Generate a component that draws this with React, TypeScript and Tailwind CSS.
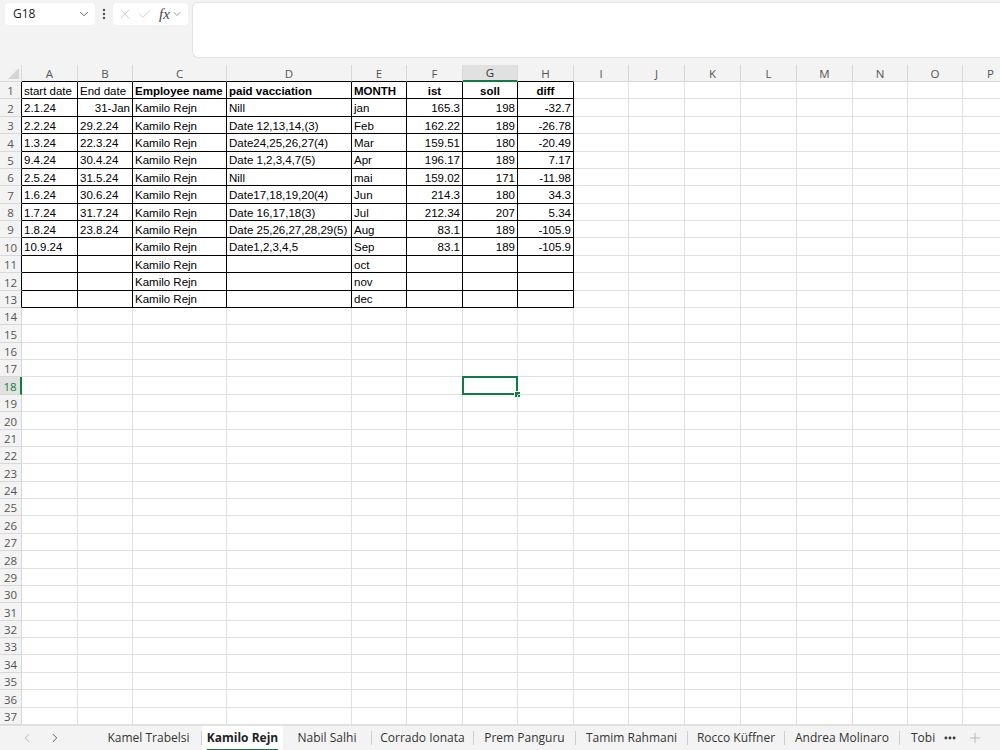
import React from "react";
import { ChevronDown, ChevronLeft, ChevronRight, X, Check, EllipsisVertical, Ellipsis, Plus } from "lucide-react";

const COLS = ["A", "B", "C", "D", "E", "F", "G", "H", "I", "J", "K", "L", "M", "N", "O", "P"];
const GRID = "grid grid-cols-[22px_56px_55px_94px_125px_55px_56px_55px_56px_55px_56px_56px_56px_56px_55px_55px_56px]";

type Cell = { t: string; b?: boolean; a?: "l" | "r" | "c" };

const R = (t: string): Cell => ({ t, a: "r" });
const L = (t: string): Cell => ({ t });
const B = (t: string, a: "l" | "c" = "l"): Cell => ({ t, b: true, a });

const DATA: Cell[][] = [
  [L("start date"), L("End date"), B("Employee name"), B("paid vacciation"), B("MONTH"), B("ist", "c"), B("soll", "c"), B("diff", "c")],
  [L("2.1.24"), R("31-Jan"), L("Kamilo Rejn"), L("Nill"), L("jan"), R("165.3"), R("198"), R("-32.7")],
  [L("2.2.24"), L("29.2.24"), L("Kamilo Rejn"), L("Date 12,13,14,(3)"), L("Feb"), R("162.22"), R("189"), R("-26.78")],
  [L("1.3.24"), L("22.3.24"), L("Kamilo Rejn"), L("Date24,25,26,27(4)"), L("Mar"), R("159.51"), R("180"), R("-20.49")],
  [L("9.4.24"), L("30.4.24"), L("Kamilo Rejn"), L("Date 1,2,3,4,7(5)"), L("Apr"), R("196.17"), R("189"), R("7.17")],
  [L("2.5.24"), L("31.5.24"), L("Kamilo Rejn"), L("Nill"), L("mai"), R("159.02"), R("171"), R("-11.98")],
  [L("1.6.24"), L("30.6.24"), L("Kamilo Rejn"), L("Date17,18,19,20(4)"), L("Jun"), R("214.3"), R("180"), R("34.3")],
  [L("1.7.24"), L("31.7.24"), L("Kamilo Rejn"), L("Date 16,17,18(3)"), L("Jul"), R("212.34"), R("207"), R("5.34")],
  [L("1.8.24"), L("23.8.24"), L("Kamilo Rejn"), L("Date 25,26,27,28,29(5)"), L("Aug"), R("83.1"), R("189"), R("-105.9")],
  [L("10.9.24"), L(""), L("Kamilo Rejn"), L("Date1,2,3,4,5"), L("Sep"), R("83.1"), R("189"), R("-105.9")],
  [L(""), L(""), L("Kamilo Rejn"), L(""), L("oct"), L(""), L(""), L("")],
  [L(""), L(""), L("Kamilo Rejn"), L(""), L("nov"), L(""), L(""), L("")],
  [L(""), L(""), L("Kamilo Rejn"), L(""), L("dec"), L(""), L(""), L("")],
];

const TABS: { name: string; w: string; active?: boolean }[] = [
  { name: "Kamel Trabelsi", w: "w-[105px]" },
  { name: "Kamilo Rejn", w: "w-[81px]", active: true },
  { name: "Nabil Salhi", w: "w-[88px]" },
  { name: "Corrado Ionata", w: "w-[101px]" },
  { name: "Prem Panguru", w: "w-[101px]" },
  { name: "Tamim Rahmani", w: "w-[111px]" },
  { name: "Rocco Küffner", w: "w-[96px]" },
  { name: "Andrea Molinaro", w: "w-[114px]" },
];

function TopBar() {
  return (
    <div className="h-[65px] bg-[#f3f3f3] flex items-start pl-[5px] pt-[2px] font-['Open_Sans',sans-serif]">
      <div className="mt-[1px] w-[90px] h-[22px] bg-white rounded-[4px] flex items-center justify-between pl-[8px] pr-[4px] text-[12px] text-[#222]">
        <span>G18</span>
        <ChevronDown size={14} strokeWidth={1.6} className="text-[#555]" />
      </div>
      <div className="mt-[1px] w-[18px] h-[22px] flex items-center justify-center text-[#555]">
        <EllipsisVertical size={14} strokeWidth={2.2} />
      </div>
      <div className="mt-[1px] w-[75px] h-[22px] bg-white rounded-[4px] flex items-center pl-[4px] pr-[2px]">
        <X size={16} strokeWidth={1} className="text-[#b8b8b8]" />
        <Check size={16} strokeWidth={1} className="ml-[4px] text-[#b8b8b8]" />
        <span className="ml-[6px] font-['Liberation_Serif',serif] italic text-[15px] text-[#444] leading-none">fx</span>
        <ChevronDown size={12} strokeWidth={1.5} className="ml-[1px] text-[#777]" />
      </div>
      <div className="ml-[4px] flex-1 h-[56px] bg-white rounded-l-[6px] border border-r-0 border-[#e3e3e3]" />
    </div>
  );
}

function ColumnHeader() {
  return (
    <div className={`${GRID} h-[17px] bg-[#f3f3f3] font-['Open_Sans',sans-serif] text-[11.5px] text-[#555]`}>
      <div className="relative border-r border-b border-[#d8d8d8]">
        <svg width="22" height="17" className="absolute left-0 top-0">
          <polygon points="19,3 19,14 8,14" fill="#d4d4d4" />
        </svg>
      </div>
      {COLS.map((c, i) => {
        const sel = c === "G";
        const inTable = i < 8;
        return (
          <div
            key={c}
            className={`flex items-center justify-center leading-none pt-[1px] border-r ${
              sel
                ? "bg-[#e1e1e1] border-b-2 border-b-[#107c41] border-r-[#d8d8d8] text-[#333]"
                : inTable
                ? "border-b border-b-black border-r-[#d8d8d8]"
                : "border-b border-b-[#d8d8d8] border-r-[#d8d8d8]"
            }`}
          >
            {c}
          </div>
        );
      })}
    </div>
  );
}

function Row({ n }: { n: number }) {
  const data = n <= 13 ? DATA[n - 1] : null;
  const selRow = n === 18;
  return (
    <div className={`${GRID} h-[17.38px]`}>
      <div
        className={`flex items-center justify-center leading-none pt-[2px] font-['Open_Sans',sans-serif] text-[11.5px] border-b border-b-[#d8d8d8] ${
          selRow
            ? "bg-[#e1e1e1] text-[#107c41] border-r-2 border-r-[#107c41]"
            : data
            ? "bg-[#f3f3f3] text-[#555] border-r border-r-black"
            : "bg-[#f3f3f3] text-[#555] border-r border-r-[#d8d8d8]"
        }`}
      >
        {n}
      </div>
      {COLS.map((c, i) => {
        const cell = data && i < 8 ? data[i] : null;
        const black = !!cell;
        const sel = selRow && c === "G";
        return (
          <div
            key={c}
            className={`relative flex items-center whitespace-nowrap px-[2px] pt-[3px] font-['Liberation_Sans',sans-serif] text-[11.5px] leading-none text-black border-r border-b ${
              black ? "border-black" : "border-[#e1e1e1]"
            } ${cell?.a === "r" ? "justify-end" : cell?.a === "c" ? "justify-center" : "justify-start"} ${
              cell?.b ? "font-bold" : ""
            } ${sel ? "overflow-visible" : "overflow-hidden"}`}
          >
            {cell?.t}
            {sel && (
              <div className="absolute left-[-1px] top-[-1px] right-[-1px] bottom-[-1px] border-2 border-[#107c41]">
                <div className="absolute right-[-5px] bottom-[-5px] w-[7px] h-[7px] bg-[#107c41] border border-white" />
              </div>
            )}
          </div>
        );
      })}
    </div>
  );
}

function TabBar() {
  return (
    <div className="h-[25px] bg-[#f3f3f3] border-t border-[#e1e1e1] flex items-stretch font-['Open_Sans',sans-serif] text-[12px] text-[#333]">
      <div className="w-[96px] flex items-center pl-[20px] gap-[14px]">
        <ChevronLeft size={14} strokeWidth={1.5} className="text-[#aaa]" />
        <ChevronRight size={14} strokeWidth={1.5} className="text-[#444]" />
      </div>
      {TABS.map((t) => (
        <React.Fragment key={t.name}>
          <div
            className={`${t.w} relative flex items-center justify-center whitespace-nowrap ${
              t.active ? "bg-white font-bold text-[#222]" : ""
            }`}
          >
            <span className="relative">
              {t.name}
              {t.active && <span className="absolute left-0 right-0 bottom-[-4px] h-[2px] bg-[#107c41]" />}
            </span>
          </div>
          {!t.active && (
            <div className="w-px flex items-center">
              <div className="w-px h-[14px] bg-[#cfcfcf]" />
            </div>
          )}
        </React.Fragment>
      ))}
      <div className="flex items-center pl-[11px]">
        <span>Tobi</span>
        <Ellipsis size={14} strokeWidth={3} className="ml-[8px] text-[#333]" />
        <Plus size={16} strokeWidth={1} className="ml-[10px] text-[#999]" />
      </div>
    </div>
  );
}

export default function App() {
  const rows = Array.from({ length: 37 }, (_, i) => i + 1);
  return (
    <div className="w-[1000px] h-[750px] overflow-hidden bg-white flex flex-col">
      <TopBar />
      <div className="flex-1 overflow-hidden">
        <ColumnHeader />
        {rows.map((n) => (
          <Row key={n} n={n} />
        ))}
      </div>
      <TabBar />
    </div>
  );
}
